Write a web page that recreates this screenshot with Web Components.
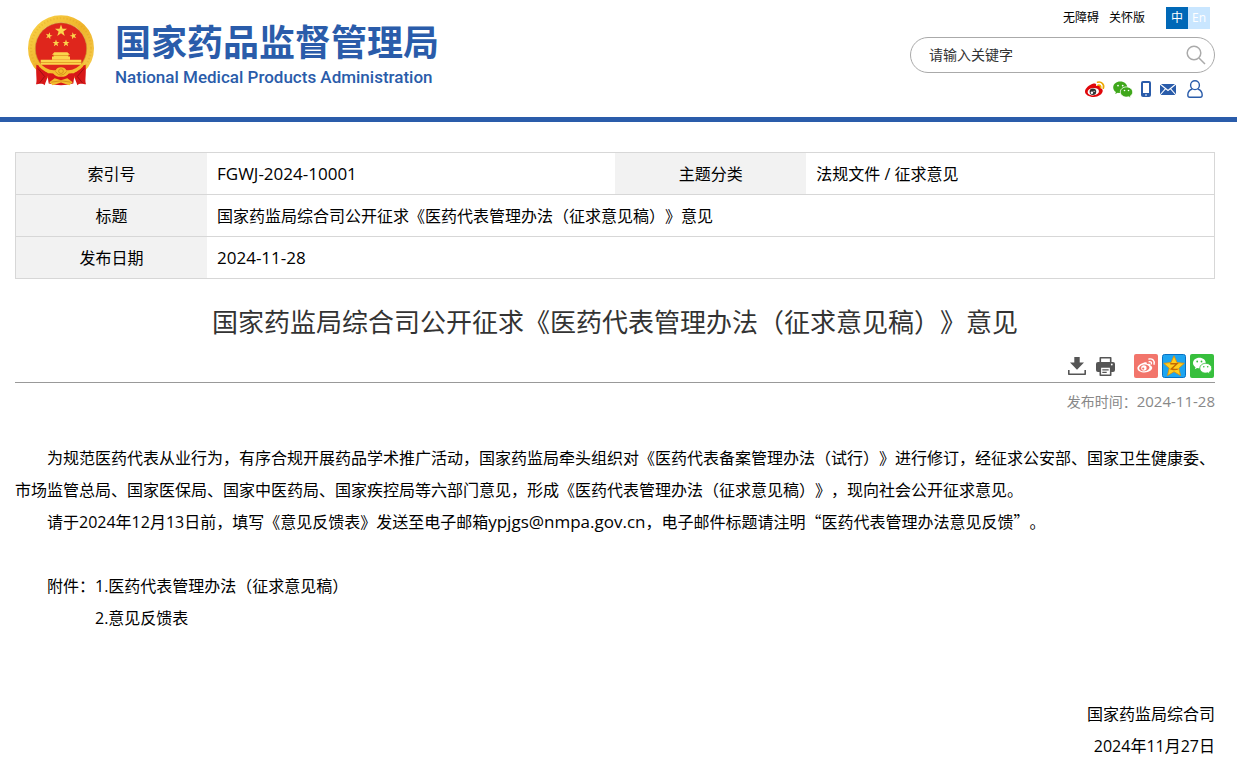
<!DOCTYPE html>
<html lang="zh-CN">
<head>
<meta charset="utf-8">
<meta name="viewport" content="width=device-width, initial-scale=1">
<title>国家药监局综合司公开征求《医药代表管理办法（征求意见稿）》意见</title>
<style>
  body {
    margin: 0;
    background: #fff;
    color: #000;
    font: 16px/32px "Open Sans", "Noto Sans CJK SC", sans-serif;
    text-spacing-trim: space-all;
    --brand: #2a5caa;
    --line: #d7d7d7;
    --gutter: 0 22px 0 15px;
  }
</style>
</head>
<body>
<site-header></site-header>
<main>
  <doc-info></doc-info>
  <doc-title date="2024-11-28">国家药监局综合司公开征求《医药代表管理办法（征求意见稿）》意见</doc-title>
  <doc-body></doc-body>
</main>

<script>
const ICONS = {
  search: ['0 0 20 20', `<g fill="none" stroke="#aaa" stroke-width="1.5"><circle cx="8" cy="8" r="6.8"/><path d="M13 13l6 6"/></g>`],
  weibo: ['0 0 19 16', `
    <path fill="#e0060a" d="M7.8 2.800c1.500-.6 3-.5 3.300.6.2.6.1 1.100-.1 1.700 2.200-.9 4.500-.9 5 .4.3.6.1 1.200-.1 1.700 1.200.5 1.800 1.400 1.800 2.600 0 3.300-4.200 6.200-9 6.200S0 13.600 0 10.500C0 7.500 4.400 3.800 7.800 2.800z"/>
    <ellipse cx="8.300" cy="10.700" rx="5.700" ry="3.700" fill="#fff" transform="rotate(-7 8.300 10.700)"/>
    <circle cx="7.900" cy="10.800" r="3.300" fill="#333"/><circle cx="6.900" cy="11.700" r="1.200" fill="#fff"/><circle cx="9.100" cy="10.300" r=".6" fill="#fff"/>
    <g fill="none" stroke="#eea800" stroke-width="1.700" stroke-linecap="round"><path d="M12.600 1.200c4-1 7 2.400 5.700 6"/><path d="M13 4.200c1.700-.5 3 .8 2.600 2.400"/></g>`],
  wechat: ['0 0 19 17', `
    <path fill="#3fa71b" d="M7.300.5C3.300.5.2 3.100.2 6.400c0 1.900 1 3.500 2.700 4.600L2.200 13l2.500-1.300c.9.300 1.700.4 2.600.4 4 0 7.100-2.500 7.100-5.700S11.300.5 7.300.5z"/>
    <path fill="#3fa71b" stroke="#fff" stroke-width=".8" d="M13.500 5.900c-3.500 0-6.200 2.300-6.200 5.100s2.700 5.100 6.200 5.100c.8 0 1.500-.1 2.200-.3l2.200 1.100-.6-1.800c1.500-1 2.400-2.400 2.400-4 0-2.900-2.700-5.200-6.200-5.200z"/>
    <g fill="#fff"><circle cx="5" cy="4.600" r=".9"/><circle cx="9.700" cy="4.600" r=".9"/><circle cx="11.500" cy="9.500" r=".8"/><circle cx="15.500" cy="9.500" r=".8"/></g>`],
  phone: ['0 0 10 16', `<rect width="10" height="16" rx="2" fill="#2a5caa"/><path fill="#fff" d="M2 2h6v10H2zM4 13.500h2v1H4z"/>`],
  mail: ['0 0 18 11', `<path fill="#2a5caa" d="M0 0h16v11H0z"/><path fill="none" stroke="#fff" stroke-width="1.100" d="M0 0l8 6.500L16 0M0 11l5.600-6.300M16 11l-5.600-6.300"/>`],
  user: ['0 0 16 18', `<g fill="none" stroke="#2a5caa" stroke-width="1.400"><circle cx="8" cy="5.200" r="4.400"/><path d="M5.300 9C2.500 10 .8 12.400.8 15c0 1.500.6 2.300 2 2.300h10.400c1.400 0 2-.8 2-2.300 0-2.600-1.700-5-4.500-6"/></g>`],
  download: ['0 0 18 18', `<path fill="#555" d="M6.300 0h5.400v5.500h4.300L9 12.800 2 5.500h4.300z"/><path fill="none" stroke="#555" stroke-width="1.600" stroke-linejoin="round" d="M.8 13v4.200h16.400V13"/>`],
  print: ['0 0 19 19', `
    <path fill="#fff" stroke="#555" stroke-width="1.600" stroke-linejoin="round" d="M4.300 6V.8h10.400V6"/>
    <rect y="5" width="19" height="10" rx="2" fill="#555"/>
    <path fill="#fff" stroke="#555" stroke-width="1.600" stroke-linejoin="round" d="M4.300 10h10.400v8.200H4.300z"/>
    <path stroke="#555" stroke-width="1.300" d="M6.300 12.800h6.400M6.300 15.300h4.400"/><circle cx="15.800" cy="7.500" r=".9" fill="#fff"/>`],
  shareWeibo: ['0 0 24 24', `
    <rect width="24" height="24" rx="2" fill="#f2756b"/>
    <path fill="#fff" d="M10.200 8.500c1.400-.6 2.600-.3 2.700.5 0 .4 0 .8-.2 1.200 1.800-.7 3.500-.6 3.800.4.200.4.100.8-.1 1.200 1.200.3 1.800 1.100 1.800 2 0 2.500-3.400 4.600-7.600 4.600-4 0-7.200-1.600-7.200-4.200 0-2.300 3.500-4.900 6.800-5.700z"/>
    <ellipse cx="10.300" cy="13.900" rx="5.200" ry="3.300" fill="#f2756b" transform="rotate(-7 10.300 13.900)"/>
    <circle cx="9.900" cy="14" r="2.700" fill="#fff"/><circle cx="9.200" cy="14.600" r="1.100" fill="#f2756b"/>
    <g fill="none" stroke="#fff" stroke-width="1.400" stroke-linecap="round"><path d="M15 5c3.500-.8 6 2 5 5.200"/><path d="M15.200 7.700c1.500-.4 2.600.7 2.200 2.100"/></g>`],
  qzone: ['0 0 24 24', `
    <rect x=".5" y=".5" width="23" height="23" rx="2" fill="#1ea5f0" stroke="#0671c4"/>
    <path fill="#ffce1f" stroke="#e58b00" stroke-width=".8" stroke-linejoin="round" d="M12 1.800l3 6.800 7.300.7-5.500 4.900 1.700 7.300L12 17.700l-6.500 3.800 1.700-7.300-5.500-4.900 7.300-.7z"/>
    <path fill="none" stroke="#c56a00" stroke-width="1.400" d="M8.300 9.800h6.700l-5.700 5.200c2.200.6 4.500.6 6.500.1"/>`],
  shareWechat: ['0 0 24 24', `
    <rect width="24" height="24" rx="2" fill="#37bf3d"/>
    <path fill="#fff" d="M9.400 3.800C5.700 3.800 3 6.100 3 9.100c0 1.700.9 3.200 2.500 4.200l-.6 1.900 2.200-1.200c.8.200 1.500.3 2.300.3 3.700 0 6.400-2.300 6.400-5.200s-2.700-5.300-6.400-5.300z"/>
    <path fill="#fff" stroke="#37bf3d" stroke-width=".9" d="M15.800 9.300c-3.400 0-6 2.200-6 4.900s2.600 4.900 6 4.900c.7 0 1.300-.1 2-.3l2.200 1.300-.6-2c1.500-.9 2.400-2.300 2.400-3.900 0-2.700-2.600-4.900-6-4.900z"/>
    <g fill="#37bf3d"><circle cx="7.200" cy="7.500" r=".9"/><circle cx="11.500" cy="7.500" r=".9"/><circle cx="13.800" cy="12.800" r=".8"/><circle cx="17.700" cy="12.800" r=".8"/></g>`],
};

class SiteIcon extends HTMLElement {
  connectedCallback() {
    const [box, shapes] = ICONS[this.getAttribute('name')];
    const [, , w, h] = box.split(' ');
    this.attachShadow({ mode: 'open' }).innerHTML = `
      <style>
        :host { display: block; flex: none; }
        svg { display: block; overflow: visible; }
      </style>
      <svg width="${w}" height="${h}" viewBox="${box}" aria-hidden="true">${shapes}</svg>`;
  }
}
customElements.define('site-icon', SiteIcon);

class NationalEmblem extends HTMLElement {
  constructor() {
    super();
    this.attachShadow({ mode: 'open' }).innerHTML = `
      <style>
        :host { display: block; flex: none; }
        svg { display: block; }
      </style>
      <svg width="66" height="71" viewBox="54 44 198 212" role="img" aria-label="国徽">
        <defs>
          <linearGradient id="gold" x1="0" y1="0" x2="1" y2="1">
            <stop offset="0" stop-color="#f9d44a"/><stop offset=".5" stop-color="#efb32a"/><stop offset="1" stop-color="#f6cf52"/>
          </linearGradient>
          <path id="star" d="M0-10L2.400-3.100 9.500-3.100 3.800 1.200 5.900 8.100 0 4-5.900 8.100-3.800 1.200-9.500-3.100-2.400-3.100z"/>
        </defs>
        <circle cx="153" cy="143" r="88" fill="none" stroke="url(#gold)" stroke-width="22"/>
        <circle cx="153" cy="143" r="90" fill="none" stroke="#d99a1c" stroke-width="6" stroke-dasharray="4 6" opacity=".3"/>
        <circle cx="153" cy="144" r="77" fill="#df261c" stroke="#c98a17" stroke-width="2"/>
        <g fill="#fbd54c">
          <use href="#star" transform="translate(153 91) scale(1.900)"/>
          <use href="#star" transform="translate(117 106) rotate(15) scale(1.100)"/>
          <use href="#star" transform="translate(190 106) rotate(-15) scale(1.100)"/>
          <use href="#star" transform="translate(138 128) scale(1.100)"/>
          <use href="#star" transform="translate(168 128) scale(1.100)"/>
          <path d="M133 155h39l8 8h-5v5h5v10h-54v-10h5v-5h-5z"/>
          <path d="M92 178h122v15H92z"/>
        </g>
        <path fill="none" stroke="#d9891a" stroke-width="2" d="M131 165h44M92 186h122"/>
        <path fill="#d81718" d="M79 193c14 4 30 15 36 28-3 14-9 24-11 33-7-8-19-3-26-3 4-12-1-24 1-58zM227 193c-14 4-30 15-36 28 3 14 9 24 11 33 7-8 19-3 26-3-4-12 1-24-1-58z"/>
        <path fill="none" stroke="#9d0f12" stroke-width="3" d="M84 204l20 24-16 20M222 204l-20 24 16 20"/>
        <path fill="#d81718" d="M112 218h82l-4 31q-37 10-74 0z"/>
        <path fill="#f4bd2d" d="M84 184q28 29 53 25 4-9 16-9t16 9q25 4 53-25l-3 14q-18 21-42 20-7 11-24 11t-24-11q-24 1-42-20z"/>
        <path fill="#f4bd2d" d="M118 245l16-12 19 6 19-6 16 12-10 9-25-8-25 8z"/>
        <g fill="none" stroke="#c87c13" stroke-width="2"><circle cx="153" cy="212" r="7"/><path d="M136 213q17 22 34 0M124 245q29-8 58 0"/></g>
      </svg>`;
  }
}
customElements.define('national-emblem', NationalEmblem);

class SearchBox extends HTMLElement {
  constructor() {
    super();
    this.attachShadow({ mode: 'open' }).innerHTML = `
      <style>
        :host { display: block; }
        form {
          display: flex;
          align-items: center;
          box-sizing: border-box;
          height: 36px;
          padding: 0 8px 0 18px;
          border: 1px solid #aaa;
          border-radius: 18px;
        }
        input {
          flex: 1;
          min-width: 0;
          padding: 0;
          border: 0;
          outline: 0;
          background: none;
          color: #333;
          font: inherit;
          font-size: 14px;
          line-height: 20px;
        }
        input::placeholder { color: #333; opacity: 1; }
        button { padding: 0; border: 0; background: none; cursor: pointer; }
      </style>
      <form role="search">
        <input type="search" aria-label="站内搜索" placeholder="请输入关键字">
        <button aria-label="搜索"><site-icon name="search"></site-icon></button>
      </form>`;
  }
}
customElements.define('search-box', SearchBox);

class SiteHeader extends HTMLElement {
  constructor() {
    super();
    this.attachShadow({ mode: 'open' }).innerHTML = `
      <style>
        :host {
          display: block;
          padding: var(--gutter);
          border-bottom: 5px solid var(--brand);
        }
        header { display: flex; justify-content: space-between; height: 117px; }
        a { color: inherit; text-decoration: none; }
        .brand { display: flex; gap: 21px; padding: 15px 0 0 13px; align-items: flex-start; color: var(--brand); }
        .names { display: flex; flex-direction: column; padding-top: 6px; }
        .cn { font-size: 36px; line-height: 44px; font-weight: 700; white-space: nowrap; }
        .en { font: 500 17px/24px Roboto, sans-serif; white-space: nowrap; }
        .side { width: 305px; padding-top: 7px; }
        .top { display: flex; justify-content: flex-end; gap: 10px; padding: 0 5px 8px 0; font-size: 12px; line-height: 22px; }
        .lang { display: flex; margin-left: 11px; color: #fff; text-align: center; }
        .lang a { width: 22px; background: #c9e6ff; }
        .lang .on { background: #0068b7; }
        .icons { display: flex; align-items: center; justify-content: flex-end; height: 18px; gap: 9px; padding: 7px 12px 0 0; }
      </style>
      <header>
        <a class="brand" href="#">
          <national-emblem></national-emblem>
          <span class="names">
            <span class="cn">国家药品监督管理局</span>
            <span class="en">National Medical Products Administration</span>
          </span>
        </a>
        <div class="side">
          <nav class="top">
            <a href="#">无障碍</a>
            <a href="#">关怀版</a>
            <span class="lang"><a class="on" href="#">中</a><a href="#">En</a></span>
          </nav>
          <search-box></search-box>
          <nav class="icons">
            <a href="#" aria-label="微博"><site-icon name="weibo"></site-icon></a>
            <a href="#" aria-label="微信"><site-icon name="wechat"></site-icon></a>
            <a href="#" aria-label="手机版"><site-icon name="phone"></site-icon></a>
            <a href="#" aria-label="邮箱"><site-icon name="mail"></site-icon></a>
            <a href="#" aria-label="个人中心"><site-icon name="user"></site-icon></a>
          </nav>
        </div>
      </header>`;
  }
}
customElements.define('site-header', SiteHeader);

class DocInfo extends HTMLElement {
  constructor() {
    super();
    this.attachShadow({ mode: 'open' }).innerHTML = `
      <style>
        :host { display: block; padding: var(--gutter); margin-top: 30px; }
        table { width: 100%; table-layout: fixed; border-collapse: collapse; border: 1px solid var(--line); }
        tr + tr { border-top: 1px solid var(--line); }
        th, td { height: 41px; padding: 0 10px; line-height: 24px; font-weight: 400; }
        th { background: #f2f2f2; text-align: center; }
        td { text-align: left; }
        .key { width: 171px; }
        .num { font-size: 17px; }
      </style>
      <table>
        <tr>
          <th class="key" scope="row">索引号</th><td class="num">FGWJ-2024-10001</td>
          <th class="key" scope="row">主题分类</th><td>法规文件 / 征求意见</td>
        </tr>
        <tr><th scope="row">标题</th><td colspan="3">国家药监局综合司公开征求《医药代表管理办法（征求意见稿）》意见</td></tr>
        <tr><th scope="row">发布日期</th><td class="num" colspan="3">2024-11-28</td></tr>
      </table>`;
  }
}
customElements.define('doc-info', DocInfo);

class DocTitle extends HTMLElement {
  connectedCallback() {
    this.attachShadow({ mode: 'open' }).innerHTML = `
      <style>
        :host { display: block; padding: var(--gutter); margin-top: 23px; }
        h1 { margin: 0; color: #333; font-size: 26px; line-height: 40px; font-weight: 400; text-align: center; }
        .tools {
          display: flex;
          align-items: center;
          justify-content: flex-end;
          gap: 4px;
          padding: 12px 1px 4px 0;
          border-bottom: 1px solid #999;
        }
        button, .tools a { display: block; padding: 0; border: 0; background: none; cursor: pointer; }
        .print { margin: 0 15px 0 6px; }
        .date { margin: 0; color: #888; font-size: 14px; line-height: 36px; text-align: right; }
        time { font-size: 15px; }
      </style>
      <h1><slot></slot></h1>
      <div class="tools">
        <button aria-label="下载"><site-icon name="download"></site-icon></button>
        <button class="print" aria-label="打印"><site-icon name="print"></site-icon></button>
        <a href="#" aria-label="分享到微博"><site-icon name="shareWeibo"></site-icon></a>
        <a href="#" aria-label="分享到QQ空间"><site-icon name="qzone"></site-icon></a>
        <a href="#" aria-label="分享到微信"><site-icon name="shareWechat"></site-icon></a>
      </div>
      <p class="date">发布时间：<time>${this.getAttribute('date')}</time></p>`;
  }
}
customElements.define('doc-title', DocTitle);

class DocBody extends HTMLElement {
  constructor() {
    super();
    this.attachShadow({ mode: 'open' }).innerHTML = `
      <style>
        :host { display: block; padding: var(--gutter); margin-top: 22px; }
        p { margin: 0; text-indent: 2em; }
        .files { display: flex; margin: 32px 0 64px; padding-left: 32px; }
        ol { margin: 0; padding: 0; list-style: none; }
        a { color: inherit; text-decoration: none; }
        .mail { font-size: 17px; line-height: 24px; }
        .quote { font-family: "Noto Sans CJK SC", sans-serif; line-height: 24px; }
        .sign { text-align: right; text-indent: 0; }
      </style>
      <p>为规范医药代表从业行为，有序合规开展药品学术推广活动，国家药监局牵头组织对《医药代表备案管理办法（试行）》进行修订，经征求公安部、国家卫生健康委、市场监管总局、国家医保局、国家中医药局、国家疾控局等六部门意见，形成《医药代表管理办法（征求意见稿）》，现向社会公开征求意见。</p>
      <p>请于2024年12月13日前，填写《意见反馈表》发送至电子邮箱<span class="mail">ypjgs@nmpa.gov.cn</span>，电子邮件标题请注明<span class="quote">“医药代表管理办法意见反馈”</span>。</p>
      <div class="files">
        <span>附件：</span>
        <ol>
          <li><a href="#">1.医药代表管理办法（征求意见稿）</a></li>
          <li><a href="#">2.意见反馈表</a></li>
        </ol>
      </div>
      <p class="sign">国家药监局综合司</p>
      <p class="sign">2024年11月27日</p>`;
  }
}
customElements.define('doc-body', DocBody);
</script>
</body>
</html>
